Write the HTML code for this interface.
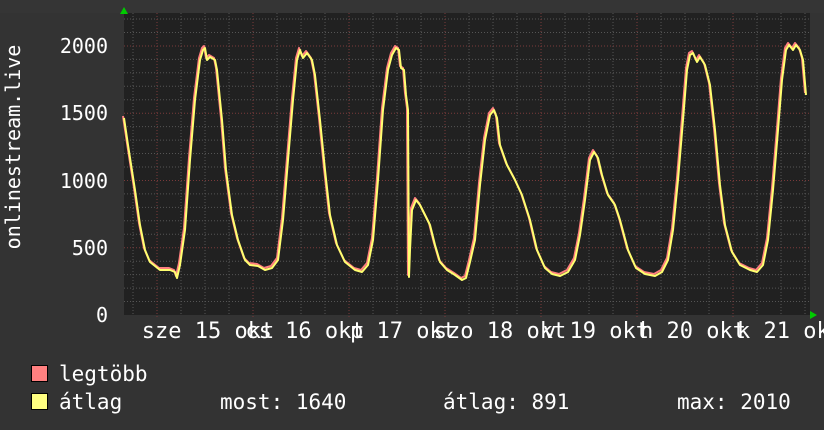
<!DOCTYPE html>
<html><head><meta charset="utf-8"><style>
html,body{margin:0;padding:0;background:#333;}
svg{display:block}
text{font-family:"DejaVu Sans Mono","Liberation Mono",monospace;fill:#fff;}
</style></head><body>
<svg width="824" height="430" viewBox="0 0 824 430" xmlns="http://www.w3.org/2000/svg">
<rect width="824" height="430" fill="#333"/>
<rect x="0" y="0" width="824" height="13" fill="#353535"/>
<rect x="124" y="13" width="686" height="302" fill="#212121"/>
<g stroke="#555" stroke-width="1" stroke-dasharray="1,2">
<line x1="124" y1="301.5" x2="810" y2="301.5"/><line x1="124" y1="288.1" x2="810" y2="288.1"/><line x1="124" y1="274.6" x2="810" y2="274.6"/><line x1="124" y1="261.2" x2="810" y2="261.2"/>
<line x1="124" y1="234.3" x2="810" y2="234.3"/><line x1="124" y1="220.8" x2="810" y2="220.8"/><line x1="124" y1="207.4" x2="810" y2="207.4"/><line x1="124" y1="193.9" x2="810" y2="193.9"/>
<line x1="124" y1="167" x2="810" y2="167"/><line x1="124" y1="153.5" x2="810" y2="153.5"/><line x1="124" y1="140.1" x2="810" y2="140.1"/><line x1="124" y1="126.6" x2="810" y2="126.6"/>
<line x1="124" y1="99.7" x2="810" y2="99.7"/><line x1="124" y1="86.3" x2="810" y2="86.3"/><line x1="124" y1="72.8" x2="810" y2="72.8"/><line x1="124" y1="59.4" x2="810" y2="59.4"/>
<line x1="124" y1="32.5" x2="810" y2="32.5"/><line x1="124" y1="19" x2="810" y2="19"/>
<line x1="133" y1="13" x2="133" y2="315"/><line x1="181" y1="13" x2="181" y2="315"/><line x1="205" y1="13" x2="205" y2="315"/><line x1="229" y1="13" x2="229" y2="315"/>
<line x1="277" y1="13" x2="277" y2="315"/><line x1="301" y1="13" x2="301" y2="315"/><line x1="325" y1="13" x2="325" y2="315"/>
<line x1="373" y1="13" x2="373" y2="315"/><line x1="397" y1="13" x2="397" y2="315"/><line x1="421" y1="13" x2="421" y2="315"/>
<line x1="469" y1="13" x2="469" y2="315"/><line x1="493" y1="13" x2="493" y2="315"/><line x1="517" y1="13" x2="517" y2="315"/>
<line x1="565" y1="13" x2="565" y2="315"/><line x1="589" y1="13" x2="589" y2="315"/><line x1="613" y1="13" x2="613" y2="315"/>
<line x1="661" y1="13" x2="661" y2="315"/><line x1="685" y1="13" x2="685" y2="315"/><line x1="709" y1="13" x2="709" y2="315"/>
<line x1="757" y1="13" x2="757" y2="315"/><line x1="781" y1="13" x2="781" y2="315"/><line x1="805" y1="13" x2="805" y2="315"/>
</g>
<g stroke="#7a3a3a" stroke-width="1" stroke-dasharray="1,2">
<line x1="124" y1="247.7" x2="810" y2="247.7"/><line x1="124" y1="180.5" x2="810" y2="180.5"/><line x1="124" y1="113.2" x2="810" y2="113.2"/><line x1="124" y1="46" x2="810" y2="46"/>
<line x1="157" y1="13" x2="157" y2="318"/><line x1="253" y1="13" x2="253" y2="318"/><line x1="349" y1="13" x2="349" y2="318"/><line x1="445" y1="13" x2="445" y2="318"/><line x1="541" y1="13" x2="541" y2="318"/><line x1="637" y1="13" x2="637" y2="318"/><line x1="733" y1="13" x2="733" y2="318"/>
</g>
<polygon points="120,14 128,14 124,7" fill="#00cc00"/>
<polygon points="810,311 810,319 817,315" fill="#00cc00"/>
<g fill="none" stroke-width="2" stroke-linejoin="round">
<polyline transform="translate(-1,-2)" stroke="#ff7f7f" points="124,118 128,145 135,190 140,225 145,250 150,262 155,266 160,270 170,270 175,272 177,278 180,265 185,230 190,160 195,100 200,60 203,50 205,48 207,60 210,57 215,60 217,70 222,120 226,170 232,215 238,240 245,260 250,265 258,266 265,270 272,268 278,260 283,220 288,160 293,100 297,60 300,50 303,58 307,53 312,60 315,75 320,120 325,170 330,215 337,245 345,262 355,270 362,272 368,265 373,240 378,180 383,110 388,70 392,55 396,48 399,50 401,68 404,70 406,95 408,110 409,277 410,250 412,210 416,200 420,205 425,215 430,225 435,245 440,262 447,270 455,275 462,280 466,278 470,262 475,240 480,185 485,140 490,115 494,110 497,118 500,145 507,165 515,180 522,195 530,220 537,250 545,268 552,274 560,276 568,272 575,260 580,235 585,200 590,160 594,152 598,158 602,175 608,195 615,205 620,220 628,250 636,268 645,274 655,276 662,272 668,260 673,230 678,180 683,120 687,70 690,55 693,53 697,62 700,57 705,65 710,85 715,130 720,185 725,225 732,252 740,265 750,270 757,272 763,265 768,240 773,190 778,130 782,80 786,50 789,45 793,50 796,45 800,50 803,60 806,95"/>
<polyline stroke="#ffff70" points="124,118 128,145 135,190 140,225 145,250 150,262 155,266 160,270 170,270 175,272 177,278 180,265 185,230 190,160 195,100 200,60 203,50 205,48 207,60 210,57 215,60 217,70 222,120 226,170 232,215 238,240 245,260 250,265 258,266 265,270 272,268 278,260 283,220 288,160 293,100 297,60 300,50 303,58 307,53 312,60 315,75 320,120 325,170 330,215 337,245 345,262 355,270 362,272 368,265 373,240 378,180 383,110 388,70 392,55 396,48 399,50 401,68 404,70 406,95 408,110 409,277 410,250 412,210 416,200 420,205 425,215 430,225 435,245 440,262 447,270 455,275 462,280 466,278 470,262 475,240 480,185 485,140 490,115 494,110 497,118 500,145 507,165 515,180 522,195 530,220 537,250 545,268 552,274 560,276 568,272 575,260 580,235 585,200 590,160 594,152 598,158 602,175 608,195 615,205 620,220 628,250 636,268 645,274 655,276 662,272 668,260 673,230 678,180 683,120 687,70 690,55 693,53 697,62 700,57 705,65 710,85 715,130 720,185 725,225 732,252 740,265 750,270 757,272 763,265 768,240 773,190 778,130 782,80 786,50 789,45 793,50 796,45 800,50 803,60 806,95"/>
</g>
<g font-size="20" text-anchor="end">
<text x="108" y="53">2000</text><text x="108" y="120">1500</text><text x="108" y="188">1000</text><text x="108" y="255">500</text><text x="108" y="322">0</text>
</g>
<text transform="translate(20,147) rotate(-90)" text-anchor="middle" font-size="20">onlinestream.live</text>
<g font-size="22" text-anchor="middle">
<text x="208" y="338">sze 15 okt</text>
<text x="305" y="338">cs 16 okt</text>
<text x="403" y="338">p 17 okt</text>
<text x="500" y="338">szo 18 okt</text>
<text x="596" y="338">v 19 okt</text>
<text x="693" y="338">h 20 okt</text>
<text x="790" y="338">k 21 okt</text>
</g>
<rect x="31.5" y="365.5" width="16" height="16" fill="#ff8080" stroke="#000"/>
<rect x="31.5" y="393.5" width="16" height="16" fill="#ffff80" stroke="#000"/>
<g font-size="21">
<text x="59" y="381">legtöbb</text>
<text x="59" y="409">átlag</text>
<text x="220" y="409">most: 1640</text>
<text x="443" y="409">átlag: 891</text>
<text x="677" y="409">max: 2010</text>
</g>
</svg>
</body></html>
